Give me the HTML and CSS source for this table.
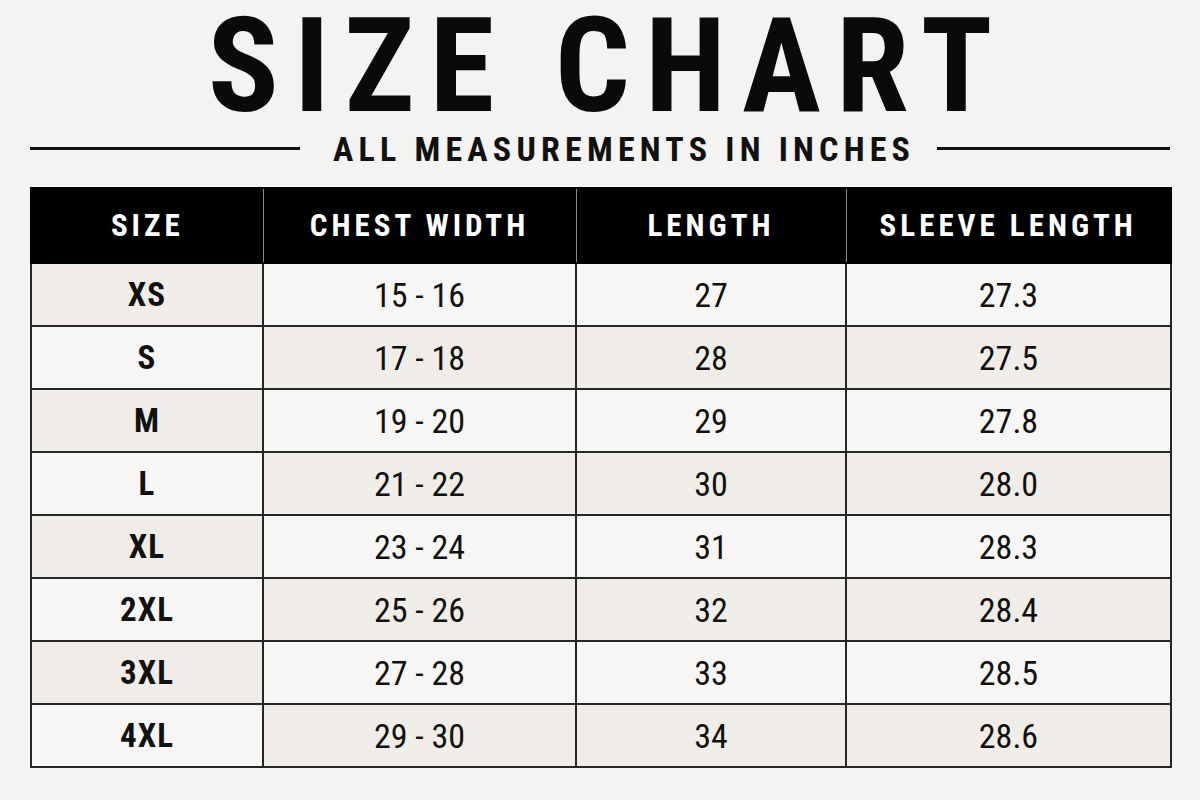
FILE: index.html
```html
<!DOCTYPE html>
<html lang="en">
<head>
<meta charset="utf-8">
<title>Size Chart</title>
<link rel="stylesheet" href="styles.css">
</head>
<body>
<main class="page">
  <h1 class="title">SIZE CHART</h1>
  <div class="subtitle-row">
    <span class="rule rule-left"></span>
    <h2 class="subtitle">ALL MEASUREMENTS IN INCHES</h2>
    <span class="rule rule-right"></span>
  </div>
  <table class="chart">
    <colgroup>
      <col class="c-size"><col class="c-chest"><col class="c-length"><col class="c-sleeve">
    </colgroup>
    <thead>
      <tr><th>SIZE</th><th>CHEST WIDTH</th><th>LENGTH</th><th>SLEEVE LENGTH</th></tr>
    </thead>
    <tbody>
      <tr class="odd"><td class="size">XS</td><td>15 - 16</td><td>27</td><td>27.3</td></tr>
      <tr class="even"><td class="size">S</td><td>17 - 18</td><td>28</td><td>27.5</td></tr>
      <tr class="odd"><td class="size">M</td><td>19 - 20</td><td>29</td><td>27.8</td></tr>
      <tr class="even"><td class="size">L</td><td>21 - 22</td><td>30</td><td>28.0</td></tr>
      <tr class="odd"><td class="size">XL</td><td>23 - 24</td><td>31</td><td>28.3</td></tr>
      <tr class="even"><td class="size">2XL</td><td>25 - 26</td><td>32</td><td>28.4</td></tr>
      <tr class="odd"><td class="size">3XL</td><td>27 - 28</td><td>33</td><td>28.5</td></tr>
      <tr class="even"><td class="size">4XL</td><td>29 - 30</td><td>34</td><td>28.6</td></tr>
    </tbody>
  </table>
</main>
</body>
</html>
```
FILE: styles.css
```css
html, body {
  margin: 0;
  padding: 0;
  background: #f4f3f1;
}

body {
  font-family: "Roboto Condensed", "DejaVu Sans Condensed", "Roboto", sans-serif;
  color: #111;
}

.page {
  width: 1140px;
  padding: 0 30px;
}

.title {
  margin: 0;
  padding-left: 15px;
  font-size: 132px;
  line-height: 132px;
  font-weight: 700;
  letter-spacing: 15px;
  text-align: center;
  white-space: nowrap;
  color: #0a0a0a;
}

.subtitle-row {
  display: flex;
  align-items: center;
  height: 32px;
  margin-top: 1px;
}

.rule {
  display: block;
  height: 3px;
  margin-top: -2px;
  background: #111;
}

.rule-left {
  width: 270px;
  margin-right: 33px;
}

.rule-right {
  flex: 1;
  margin-left: 22px;
}

.subtitle {
  margin: 0;
  font-size: 34px;
  line-height: 32px;
  font-weight: 700;
  letter-spacing: 5.2px;
  white-space: nowrap;
  color: #111;
}

.chart {
  margin-top: 22px;
  width: 1140px;
  border-collapse: collapse;
  table-layout: fixed;
}

.c-size { width: 232px; }
.c-chest { width: 313px; }
.c-length { width: 270px; }
.c-sleeve { width: 325px; }

.chart th {
  height: 73px;
  padding: 0;
  background: #000;
  color: #fff;
  font-size: 31px;
  font-weight: 700;
  letter-spacing: 4px;
  text-align: center;
  border: 2px solid #000;
  border-left: 1px solid #8a8a8a;
  border-right: 1px solid #8a8a8a;
}

.chart th:first-child { border-left: 2px solid #000; }
.chart th:last-child { border-right: 2px solid #000; }

.chart td {
  height: 61px;
  padding: 0;
  text-align: center;
  font-size: 34px;
  font-weight: 400;
  border: 2px solid #262626;
  background: #f7f6f4;
}

.chart td.size {
  font-weight: 700;
  font-size: 33px;
  letter-spacing: 1px;
}

.chart tr.odd td.size { background: #f0ede8; }
.chart tr.even td { background: #f0ede8; }
.chart tr.even td.size { background: #f7f6f4; }
```
